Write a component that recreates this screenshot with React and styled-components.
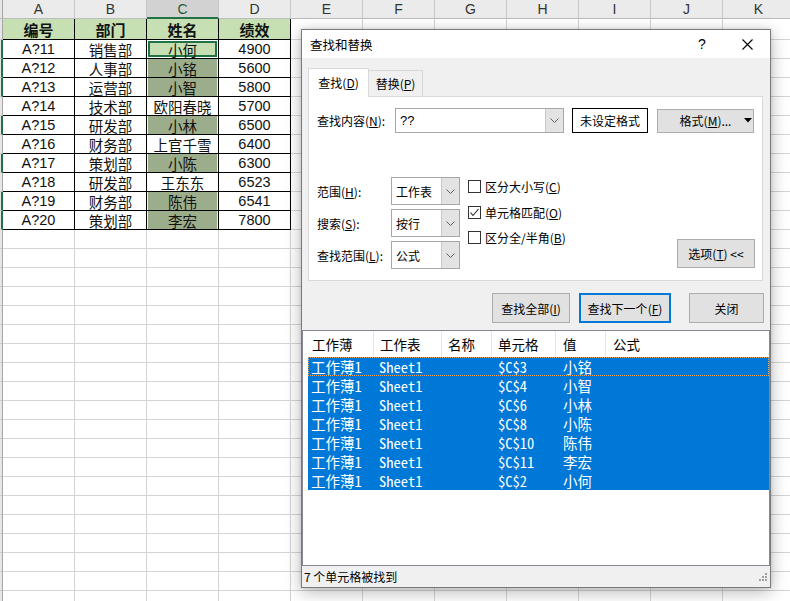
import React from 'react';
import styled, { createGlobalStyle, css } from 'styled-components';

const Global = createGlobalStyle`
  html, body { margin: 0; padding: 0; background: #fff; overflow: hidden; }
  #root { position: relative; width: 790px; height: 601px; overflow: hidden; }
  * { box-sizing: border-box; }
`;

const GREEN = '#217346';
const COLS = ['A', 'B', 'C', 'D', 'E', 'F', 'G', 'H', 'I', 'J', 'K'];
const HEAD = ['编号', '部门', '姓名', '绩效'];
const DATA = [
  ['A?11', '销售部', '小何', '4900'],
  ['A?12', '人事部', '小铭', '5600'],
  ['A?13', '运营部', '小智', '5800'],
  ['A?14', '技术部', '欧阳春晓', '5700'],
  ['A?15', '研发部', '小林', '6500'],
  ['A?16', '财务部', '上官千雪', '6400'],
  ['A?17', '策划部', '小陈', '6300'],
  ['A?18', '研发部', '王东东', '6523'],
  ['A?19', '财务部', '陈伟', '6541'],
  ['A?20', '策划部', '李宏', '7800'],
];
const FOUND = [1, 2, 4, 6, 8, 9];
const EMPTY_ROWS = 21;

const RESULTS = [
  ['$C$3', '小铭'],
  ['$C$4', '小智'],
  ['$C$6', '小林'],
  ['$C$8', '小陈'],
  ['$C$10', '陈伟'],
  ['$C$11', '李宏'],
  ['$C$2', '小何'],
];

/* ---------- spreadsheet ---------- */
const Sheet = styled.div`
  display: grid;
  grid-template-columns: 3px repeat(11, 72px);
  grid-template-rows: 19px 21px;
  grid-auto-rows: 19px;
  font-family: "Liberation Sans", "Noto Sans CJK SC", sans-serif;
  width: 795px;
`;

const Corner = styled.div`
  background: #e6e6e6;
  border-right: 1px solid #a6a6a6;
  border-bottom: 1px solid #bdbdbd;
`;

const ColHead = styled.div`
  background: ${p => (p.$sel ? '#d2d2d2' : '#ebebeb')};
  border-right: 1px solid #c8c8c8;
  border-bottom: ${p => (p.$sel ? `2px solid ${GREEN}` : '1px solid #bdbdbd')};
  color: ${p => (p.$sel ? '#1d5c38' : '#333')};
  font-size: 14px;
  display: flex;
  align-items: center;
  justify-content: center;
  padding-top: ${p => (p.$sel ? '1px' : '0')};
`;

const RowHead = styled.div`
  background: #e6e6e6;
  border-right: ${p => (p.$sel ? `2px solid ${GREEN}` : '1px solid #a6a6a6')};
  border-bottom: 1px solid #c8c8c8;
`;

const Cell = styled.div`
  border-right: 1px solid ${p => (p.$table ? '#000' : '#d4d4d4')};
  border-bottom: 1px solid ${p => (p.$table ? '#000' : '#d4d4d4')};
  background: ${p => p.$fill || '#fff'};
  display: flex;
  align-items: center;
  justify-content: center;
  white-space: nowrap;
  overflow: hidden;
  color: #111;
  font-size: ${p => (p.$head ? '15px' : '14.5px')};
  font-weight: ${p => (p.$head ? 700 : 400)};
  ${p => p.$active && css`box-shadow: inset 0 0 0 1px #fff, inset 0 0 0 3px ${GREEN};`}
  ${p => p.$found && css`box-shadow: inset 1px 0 0 #eef2ea, inset -1px 0 0 #eef2ea;`}
`;

function SheetView() {
  const cells = [];
  cells.push(<Corner key="corner" />);
  COLS.forEach(c => cells.push(<ColHead key={'h' + c} $sel={c === 'C'}>{c}</ColHead>));
  // header row
  cells.push(<RowHead key="r1" />);
  COLS.forEach((c, i) =>
    cells.push(
      i < 4 ? (
        <Cell key={'1' + c} $table $head $fill="#c6e0b4">{HEAD[i]}</Cell>
      ) : (
        <Cell key={'1' + c} />
      )
    )
  );
  DATA.forEach((row, r) => {
    const sel = r === 0 || FOUND.includes(r);
    cells.push(<RowHead key={'rh' + r} $sel={sel} />);
    COLS.forEach((c, i) => {
      if (i >= 4) {
        cells.push(<Cell key={r + c} />);
        return;
      }
      if (i === 2 && r === 0) {
        cells.push(<Cell key={r + c} $table $active $fill="#c6e0b4">{row[i]}</Cell>);
      } else if (i === 2 && FOUND.includes(r)) {
        cells.push(<Cell key={r + c} $table $found $fill="#9cad8c">{row[i]}</Cell>);
      } else {
        cells.push(<Cell key={r + c} $table>{row[i]}</Cell>);
      }
    });
  });
  for (let r = 0; r < EMPTY_ROWS; r++) {
    cells.push(<RowHead key={'er' + r} />);
    COLS.forEach(c => cells.push(<Cell key={'e' + r + c} />));
  }
  return <Sheet>{cells}</Sheet>;
}

/* ---------- dialog ---------- */
const Dialog = styled.div`
  position: absolute;
  left: 301px;
  top: 29px;
  width: 470px;
  height: 559px;
  background: #f0f0f0;
  border: 1px solid #7a7a7a;
  box-shadow: 0 4px 16px rgba(0, 0, 0, 0.28), 0 0 4px rgba(0, 0, 0, 0.12);
  display: flex;
  flex-direction: column;
  font-family: "Noto Sans CJK SC", "Liberation Sans", sans-serif;
  font-size: 12px;
  color: #000;
`;

const TitleBar = styled.div`
  flex: none;
  height: 28px;
  background: #fff;
  display: flex;
  align-items: center;
  padding: 0 17px 0 8px;
  font-size: 12.5px;
`;

const TitleText = styled.div`
  flex: 1;
`;

const HelpMark = styled.div`
  width: 20px;
  text-align: center;
  font-family: "Liberation Sans", sans-serif;
  font-size: 14px;
  margin-right: 30px;
`;

const Body = styled.div`
  flex: none;
  padding: 10px 7px 0 6px;
`;

const Tabs = styled.div`
  display: flex;
  align-items: flex-end;
  height: 28px;
`;

const Tab = styled.div`
  position: relative;
  z-index: ${p => (p.$active ? 2 : 1)};
  width: ${p => (p.$active ? '61px' : '55px')};
  height: ${p => (p.$active ? '29px' : '26px')};
  margin-left: ${p => (p.$active ? '0' : '-1px')};
  margin-bottom: ${p => (p.$active ? '-1px' : '0')};
  background: ${p => (p.$active ? '#fff' : '#f0f0f0')};
  border: 1px solid #d9d9d9;
  border-bottom: none;
  display: flex;
  align-items: center;
  justify-content: center;
  padding-bottom: ${p => (p.$active ? '2px' : '0')};
`;

const Panel = styled.div`
  height: 185px;
  background: #fff;
  border: 1px solid #d9d9d9;
  display: flex;
  flex-direction: column;
  padding: 11px 7px 11px 8px;
`;

const FindRow = styled.div`
  display: flex;
  align-items: center;
  height: 25px;
`;

const Label = styled.div`
  width: ${p => p.$w || 'auto'};
  flex: none;
  white-space: nowrap;
`;

const Combo = styled.div`
  flex: none;
  width: ${p => p.$w};
  height: ${p => p.$h};
  border: 1px solid #a7a7a7;
  background: #fff;
  display: flex;
  align-items: stretch;
`;

const ComboText = styled.div`
  flex: 1;
  display: flex;
  align-items: center;
  padding-left: ${p => p.$pad || '4px'};
  font-size: ${p => p.$fs || '12px'};
  font-family: ${p => (p.$latin ? '"Liberation Sans", sans-serif' : 'inherit')};
`;

const ComboArrow = styled.div`
  width: 18px;
  flex: none;
  background: #e3e3e3;
  border-left: 1px solid #c9c9c9;
  display: flex;
  align-items: center;
  justify-content: center;
`;

const FormatBox = styled.div`
  flex: none;
  margin-left: 8px;
  width: 76px;
  height: 25px;
  border: 1px solid #000;
  display: flex;
  align-items: center;
  justify-content: center;
`;

const Button = styled.div`
  flex: none;
  width: ${p => p.$w};
  height: ${p => p.$h || '30px'};
  margin-left: ${p => p.$ml || '0'};
  background: #e1e1e1;
  border: ${p => (p.$default ? '2px solid #0078d7' : '1px solid #adadad')};
  display: flex;
  align-items: center;
  justify-content: center;
  white-space: nowrap;
`;

const SplitButton = styled(Button)`
  display: grid;
  grid-template-columns: 1fr auto 1fr;
  align-items: center;
`;

const SplitArrow = styled.div`
  justify-self: end;
  margin-right: 1px;
  display: flex;
`;

const OptionsArea = styled.div`
  display: flex;
  align-items: flex-start;
  margin-top: 44px;
  flex: 1;
`;

const SelectGrid = styled.div`
  display: grid;
  grid-template-columns: 74px 69px;
  grid-auto-rows: 28px;
  row-gap: 4px;
  align-items: center;
`;

const CheckList = styled.div`
  display: flex;
  flex-direction: column;
  margin: -3px 0 0 8px;
`;

const CheckRow = styled.div`
  height: 25.5px;
  display: flex;
  align-items: center;
  gap: 4px;
`;

const Box = styled.div`
  width: 13px;
  height: 13px;
  border: 1px solid #333;
  background: #fff;
  display: flex;
  align-items: center;
  justify-content: center;
`;

const OptionsButton = styled(Button)`
  margin-left: auto;
  align-self: flex-end;
  margin-bottom: 1px;
`;

const ButtonRow = styled.div`
  display: flex;
  justify-content: flex-end;
  margin: 12px 6px 0 0;
  height: 30px;
`;

const ResultList = styled.div`
  flex: none;
  margin-top: 7px;
  height: 236px;
  background: #fff;
  border: 1px solid #828790;
  display: flex;
  flex-direction: column;
`;

const ListHeader = styled.div`
  height: 26px;
  display: grid;
  grid-template-columns: 71px 68px 50px 64px 50px 1fr;
  font-size: 13.5px;
`;

const HeadCell = styled.div`
  border-right: ${p => (p.$last ? 'none' : '1px solid #e5e5e5')};
  padding-left: ${p => p.$pad};
  display: flex;
  align-items: center;
  white-space: nowrap;
`;

const Rows = styled.div`
  padding: 0 0 0 5px;
  display: flex;
  flex-direction: column;
`;

const ResultRow = styled.div`
  height: 19px;
  width: 461px;
  background: #0078d7;
  color: #fff;
  display: grid;
  grid-template-columns: 66px 68px 50px 64px 50px 1fr;
  align-items: center;
  font-family: "Noto Sans Mono CJK SC", "Liberation Mono", "Noto Sans CJK SC", monospace;
  font-size: 14.5px;
  line-height: 19px;
  ${p => p.$focus && css`outline: 1px dotted #f2a65a; outline-offset: -1px;`}
`;

const RowCell = styled.div`
  padding-left: ${p => p.$pad};
  white-space: nowrap;
  overflow: hidden;
`;

const StatusBar = styled.div`
  flex: 1;
  display: flex;
  align-items: center;
  padding: 0 2px 0 2px;
  font-size: 12px;
`;

const StatusText = styled.div`
  flex: 1;
`;

function Chevron() {
  return (
    <svg width="9" height="5" viewBox="0 0 9 5">
      <polyline points="0.5,0.5 4.5,4.5 8.5,0.5" fill="none" stroke="#606060" strokeWidth="1" />
    </svg>
  );
}

function Mn({ pre, k, post = ')' }) {
  return (
    <>
      {pre}(<u>{k}</u>{post}
    </>
  );
}

export default function App() {
  return (
    <>
      <Global />
      <SheetView />
      <Dialog>
        <TitleBar>
          <TitleText>查找和替换</TitleText>
          <HelpMark>?</HelpMark>
          <svg width="11" height="11" viewBox="0 0 11 11">
            <path d="M0.5 0.5 L10.5 10.5 M10.5 0.5 L0.5 10.5" stroke="#000" strokeWidth="1.1" />
          </svg>
        </TitleBar>
        <Body>
          <Tabs>
            <Tab $active><Mn pre="查找" k="D" /></Tab>
            <Tab><Mn pre="替换" k="P" /></Tab>
          </Tabs>
          <Panel>
            <FindRow>
              <Label $w="78px"><Mn pre="查找内容" k="N" post="):" /></Label>
              <Combo $w="169px" $h="25px">
                <ComboText $latin $fs="13px">??</ComboText>
                <ComboArrow><Chevron /></ComboArrow>
              </Combo>
              <FormatBox>未设定格式</FormatBox>
              <SplitButton $w="97px" $h="24px" $ml="9px">
                <span />
                <span><Mn pre="格式" k="M" post=")..." /></span>
                <SplitArrow>
                  <svg width="8" height="5" viewBox="0 0 8 5">
                    <polygon points="0,0 8,0 4,4.5" fill="#000" />
                  </svg>
                </SplitArrow>
              </SplitButton>
            </FindRow>
            <OptionsArea>
              <SelectGrid>
                <Label><Mn pre="范围" k="H" post="):" /></Label>
                <Combo $w="69px" $h="28px">
                  <ComboText>工作表</ComboText>
                  <ComboArrow><Chevron /></ComboArrow>
                </Combo>
                <Label><Mn pre="搜索" k="S" post="):" /></Label>
                <Combo $w="69px" $h="28px">
                  <ComboText>按行</ComboText>
                  <ComboArrow><Chevron /></ComboArrow>
                </Combo>
                <Label><Mn pre="查找范围" k="L" post="):" /></Label>
                <Combo $w="69px" $h="28px">
                  <ComboText>公式</ComboText>
                  <ComboArrow><Chevron /></ComboArrow>
                </Combo>
              </SelectGrid>
              <CheckList>
                <CheckRow>
                  <Box />
                  <span><Mn pre="区分大小写" k="C" /></span>
                </CheckRow>
                <CheckRow>
                  <Box>
                    <svg width="11" height="11" viewBox="0 0 11 11">
                      <polyline points="1.5,5.5 4,8.5 9.5,2" fill="none" stroke="#222" strokeWidth="1.1" />
                    </svg>
                  </Box>
                  <span><Mn pre="单元格匹配" k="O" /></span>
                </CheckRow>
                <CheckRow>
                  <Box />
                  <span><Mn pre="区分全/半角" k="B" /></span>
                </CheckRow>
              </CheckList>
              <OptionsButton $w="78px" $h="29px">
                <Mn pre="选项" k="T" />&nbsp;&lt;&lt;
              </OptionsButton>
            </OptionsArea>
          </Panel>
        </Body>
        <ButtonRow>
          <Button $w="78px"><Mn pre="查找全部" k="I" /></Button>
          <Button $w="92px" $ml="9px" $default><Mn pre="查找下一个" k="F" /></Button>
          <Button $w="75px" $ml="18px">关闭</Button>
        </ButtonRow>
        <ResultList>
          <ListHeader>
            <HeadCell $pad="9px">工作薄</HeadCell>
            <HeadCell $pad="6px">工作表</HeadCell>
            <HeadCell $pad="6px">名称</HeadCell>
            <HeadCell $pad="6px">单元格</HeadCell>
            <HeadCell $pad="7px">值</HeadCell>
            <HeadCell $pad="7px" $last>公式</HeadCell>
          </ListHeader>
          <Rows>
            {RESULTS.map(([cell, val], i) => (
              <ResultRow key={cell} $focus={i === 0}>
                <RowCell $pad="3px">工作薄1</RowCell>
                <RowCell $pad="5px">Sheet1</RowCell>
                <RowCell $pad="6px" />
                <RowCell $pad="6px">{cell}</RowCell>
                <RowCell $pad="7px">{val}</RowCell>
                <RowCell $pad="7px" />
              </ResultRow>
            ))}
          </Rows>
        </ResultList>
        <StatusBar>
          <StatusText>7 个单元格被找到</StatusText>
          <svg width="10" height="10" viewBox="0 0 10 10">
            <g fill="#a0a0a0">
              <rect x="7" y="1" width="2" height="2" />
              <rect x="4" y="4" width="2" height="2" />
              <rect x="7" y="4" width="2" height="2" />
              <rect x="1" y="7" width="2" height="2" />
              <rect x="4" y="7" width="2" height="2" />
              <rect x="7" y="7" width="2" height="2" />
            </g>
          </svg>
        </StatusBar>
      </Dialog>
    </>
  );
}
